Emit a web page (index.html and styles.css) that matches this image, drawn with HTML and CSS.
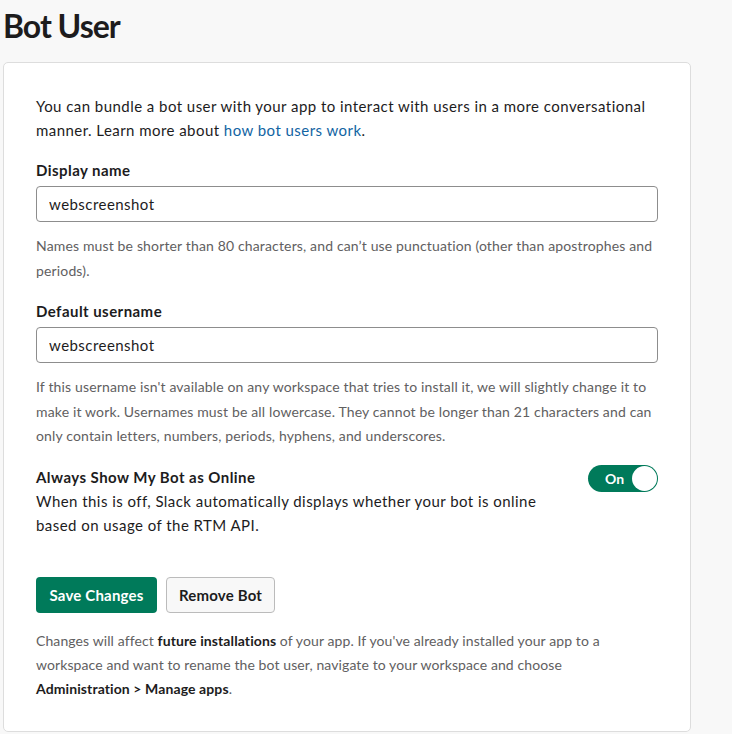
FILE: index.html
```html
<!DOCTYPE html>
<html>
<head>
<meta charset="utf-8">
<link rel="stylesheet" href="styles.css">
</head>
<body>
<div class="page">
  <h1 class="title">Bot User</h1>
  <div class="card">
    <p class="intro">You can bundle a bot user with your app to interact with users in a more conversational manner. Learn more about <a class="link" href="#">how bot users work</a>.</p>

    <label class="label">Display name</label>
    <input class="input" type="text" value="webscreenshot">
    <p class="hint">Names must be shorter than 80 characters, and can’t use punctuation (other than apostrophes and periods).</p>

    <label class="label">Default username</label>
    <input class="input" type="text" value="webscreenshot">
    <p class="hint">If this username isn't available on any workspace that tries to install it, we will slightly change it to make it work. Usernames must be all lowercase. They cannot be longer than 21 characters and can only contain letters, numbers, periods, hyphens, and underscores.</p>

    <div class="online-row">
      <div class="online-text">
        <div class="label-inline">Always Show My Bot as Online</div>
        <div class="online-desc">When this is off, Slack automatically displays whether your bot is online based on usage of the RTM API.</div>
      </div>
      <div class="toggle"><span class="toggle-label">On</span><span class="knob"></span></div>
    </div>

    <div class="actions">
      <button class="btn btn-primary">Save Changes</button>
      <button class="btn btn-secondary">Remove Bot</button>
    </div>

    <p class="footnote">Changes will affect <b>future installations</b> of your app. If you've already installed your app to a workspace and want to rename the bot user, navigate to your workspace and choose <b>Administration &gt; Manage apps</b>.</p>
  </div>
</div>
</body>
</html>
```

FILE: styles.css
```css
html, body {
  margin: 0;
  padding: 0;
  background: #f8f8f8;
  font-family: Lato, "Open Sans", sans-serif;
  color: #1d1c1d;
}

.page {
  padding-left: 3px;
  width: 688px;
}

.title {
  margin: 0;
  font-size: 32px;
  font-weight: 700;
  line-height: 52px;
  letter-spacing: -1px;
  height: 62px;
  box-sizing: border-box;
}

.card {
  background: #fff;
  border: 1px solid #dddddd;
  border-radius: 5px;
  padding: 31px 32px 30px 32px;
  letter-spacing: 0.45px;
}

.intro {
  margin: 0 0 16px 0;
  font-size: 15px;
  line-height: 24px;
}

.link {
  color: #1264a3;
  text-decoration: none;
}

.label {
  display: block;
  font-size: 15px;
  font-weight: 700;
  line-height: 24px;
  margin-bottom: 4px;
}

.input {
  display: block;
  box-sizing: border-box;
  width: 100%;
  height: 36px;
  border: 1px solid #8d8d8d;
  border-radius: 4px;
  padding: 0 12px;
  font-family: Lato, "Open Sans", sans-serif;
  font-size: 15px;
  letter-spacing: 0.45px;
  color: #1d1c1d;
  background: #fff;
}

.hint {
  margin: 12px 0 16px 0;
  font-size: 14px;
  line-height: 24.5px;
  letter-spacing: 0.15px;
  color: #616061;
}

.online-row {
  display: flex;
  justify-content: space-between;
  align-items: flex-start;
}

.online-text {
  width: 510px;
}

.label-inline {
  font-size: 15px;
  font-weight: 700;
  line-height: 24px;
}

.online-desc {
  font-size: 15px;
  line-height: 24px;
}

.toggle {
  display: flex;
  align-items: center;
  justify-content: space-between;
  box-sizing: border-box;
  width: 70px;
  height: 27px;
  border-radius: 14px;
  background: #007a5a;
  padding: 0 1px 0 17px;
  letter-spacing: 0;
}

.toggle-label {
  color: #fff;
  font-size: 14px;
  font-weight: 700;
}

.knob {
  width: 25px;
  height: 25px;
  border-radius: 50%;
  background: #fff;
}

.actions {
  display: flex;
  gap: 9px;
  margin-top: 40px;
}

.btn {
  height: 36px;
  border-radius: 4px;
  font-family: Lato, "Open Sans", sans-serif;
  font-size: 15px;
  font-weight: 700;
  letter-spacing: 0.2px;
  padding: 0;
  white-space: nowrap;
  cursor: pointer;
}

.btn-primary {
  background: #007a5a;
  color: #fff;
  border: none;
  width: 121px;
}

.btn-secondary {
  background: #f8f8f8;
  color: #1d1c1d;
  border: 1px solid #bbbbbb;
  width: 109px;
}

.footnote {
  margin: 16px 0 0 0;
  font-size: 14px;
  line-height: 24px;
  letter-spacing: 0.1px;
  color: #616061;
}

.footnote b {
  color: #1d1c1d;
  font-weight: 700;
}
```
